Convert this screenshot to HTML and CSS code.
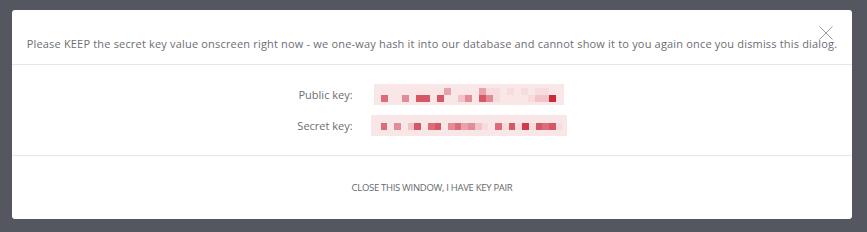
FILE: index.html
```html
<!DOCTYPE html>
<html lang="en">
<head>
    <meta charset="utf-8">
    <meta name="viewport" content="width=device-width, initial-scale=1">
    <title>API key pair</title>

    <link rel="stylesheet" href="styles.css">
</head>
<body>

<div class="modal">
    <div class="modal-header">
        <p>Please KEEP the secret key value onscreen right now - we one-way hash it into our database and cannot show it to you again once you dismiss this dialog.</p>
        <button class="close" aria-label="Close">
            <svg width="14" height="14" viewBox="0 0 14 14"><path d="M0.5 0.5L13.5 13.5M13.5 0.5L0.5 13.5" stroke="#9a9a9a" stroke-width="1"/></svg>
        </button>
    </div>
    <div class="modal-body">
        <div class="keys">
            <div class="label">Public key:</div>
            <div class="value"><div class="blur public" data-rows="0000000003000031101010110,50040660600240641000012280"></div></div>
            <div class="label">Secret key:</div>
            <div class="value"><div class="blur secret" data-rows="504026056045342105161716561"></div></div>
        </div>
    </div>
    <div class="modal-footer">
        <button class="dismiss">Close this window, I have key pair</button>
    </div>
</div>

<script>
    // pixelated placeholder for the hidden key values
    const shades = ['', '#f6dcde', '#f0c4c8', '#e9a2aa', '#e18c96', '#dc6c78', '#d65866', '#d03a4a', '#cc2a3a'];

    for (const box of document.querySelectorAll('.blur')) {
        for (const line of box.dataset.rows.split(',')) {
            const row = document.createElement('div');
            row.className = 'row';
            for (const ch of line) {
                const cell = document.createElement('span');
                const color = shades[Number(ch)];
                if (color) {
                    cell.style.background = color;
                }
                row.appendChild(cell);
            }
            box.appendChild(row);
        }
    }
</script>
</body>
</html>
```

FILE: styles.css
```css
body {
    margin: 0;
    background-color: #54575f;
    font-family: "Open Sans", sans-serif;
    color: #6c6e74;
}
.modal {
    width: 840px;
    height: 209px;
    margin: 10px 0 0 12px;
    background-color: #fff;
    border-radius: 3px;
    display: flex;
    flex-direction: column;
}
.modal-header {
    position: relative;
    height: 55px;
    border-bottom: 1px solid #e6e6e6;
    box-sizing: border-box;
    padding-top: 26px;
    text-align: center;
}
.modal-header p {
    margin: 0;
    font-size: 11px;
    line-height: 16px;
    letter-spacing: 0.18px;
    white-space: nowrap;
}
.close {
    position: absolute;
    top: 16px;
    right: 19px;
    padding: 0;
    border: 0;
    background: none;
    cursor: pointer;
}
.close svg {
    display: block;
}
.modal-body {
    height: 91px;
    border-bottom: 1px solid #e6e6e6;
    box-sizing: border-box;
    display: flex;
    align-items: center;
    justify-content: center;
}
.keys {
    display: grid;
    grid-template-columns: auto auto;
    column-gap: 18px;
    row-gap: 10px;
    align-items: center;
    font-size: 11px;
}
.label {
    text-align: right;
}
.value {
    display: flex;
    justify-content: center;
}
.blur {
    background-color: #f9e6e7;
    box-sizing: border-box;
    height: 21px;
    display: flex;
    flex-direction: column;
    justify-content: flex-end;
}
.blur.public {
    width: 190px;
    padding: 0 1px 3px 7px;
}
.blur.secret {
    width: 196px;
    padding: 0 4px 6px 10px;
}
.row {
    display: flex;
}
.row span {
    width: 7px;
    height: 7px;
}
.modal-footer {
    flex: 1;
    display: flex;
    align-items: center;
    justify-content: center;
}
.dismiss {
    font-family: "Open Sans", sans-serif;
    font-size: 9.5px;
    letter-spacing: -0.3px;
    text-transform: uppercase;
    color: #66686e;
    background: none;
    border: 0;
    padding: 4px 8px;
    cursor: pointer;
}
```
